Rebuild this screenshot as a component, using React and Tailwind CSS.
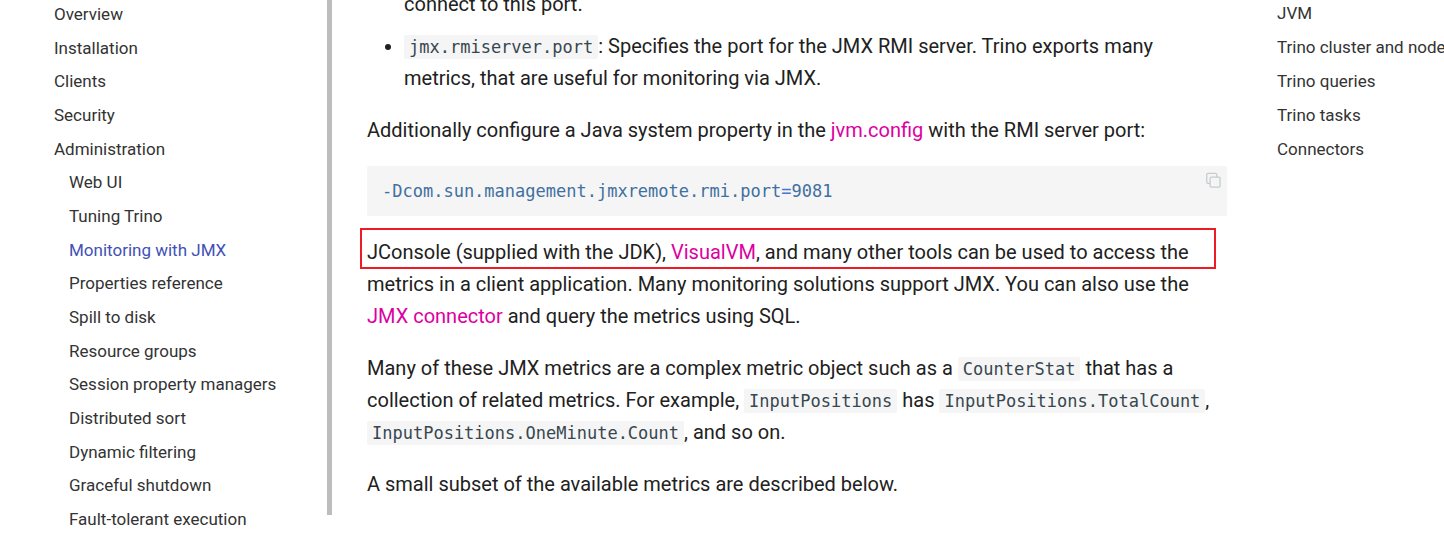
import React from 'react'

const sections = ['Overview', 'Installation', 'Clients', 'Security', 'Administration']

const adminPages = [
  'Web UI',
  'Tuning Trino',
  'Monitoring with JMX',
  'Properties reference',
  'Spill to disk',
  'Resource groups',
  'Session property managers',
  'Distributed sort',
  'Dynamic filtering',
  'Graceful shutdown',
  'Fault-tolerant execution',
]

const toc = ['JVM', 'Trino cluster and nodes', 'Trino queries', 'Trino tasks', 'Connectors']

const currentPage = 'Monitoring with JMX'

function Code({ children }) {
  return (
    <code className="rounded-xs bg-[#f5f5f5] px-[5px] py-0.5 font-['DejaVu_Sans_Mono',monospace] text-[17px] leading-none text-[#37474f]">
      {children}
    </code>
  )
}

function DocLink({ children }) {
  return <a href="#" className="text-[#dd00a1]">{children}</a>
}

function CopyIcon() {
  return (
    <svg viewBox="0 0 24 24" className="size-5" fill="none" stroke="currentColor" strokeWidth="1.5" strokeLinejoin="round">
      <rect x="8.5" y="8.5" width="12" height="12" rx="1.5" />
      <path d="M16.5 8.5v-3a1.5 1.5 0 0 0 -1.5 -1.5h-9a1.5 1.5 0 0 0 -1.5 1.5v9a1.5 1.5 0 0 0 1.5 1.5h2.5" />
    </svg>
  )
}

function Sidebar() {
  return (
    <aside className="flex w-[332px] shrink-0 justify-between">
      <nav aria-label="Documentation" className="pl-[54px] pt-0.5 pb-[7px] text-[17px] leading-6 text-[#333333]">
        <ul className="flex h-full flex-col justify-between">
          {sections.map((name) => (
            <li key={name}><a href="#">{name}</a></li>
          ))}
          {adminPages.map((name) => (
            <li key={name} className="pl-[15px]">
              <a href="#" className={name === currentPage ? 'text-[#3f51b5]' : ''}>{name}</a>
            </li>
          ))}
        </ul>
      </nav>
      <div className="mb-[23px] w-[5px] bg-[#bdbdbd]" />
    </aside>
  )
}

function Article() {
  return (
    <main className="-mt-3 flex min-w-0 flex-1 flex-col gap-5 pl-[35px] pr-[50px] text-xl leading-8">
      <ul className="flex list-disc flex-col gap-2.5 pl-[37px]">
        <li className="list-none">connect to this port.</li>
        <li>
          <Code>jmx.rmiserver.port</Code>: Specifies the port for the JMX RMI server. Trino exports many
          metrics, that are useful for monitoring via JMX.
        </li>
      </ul>

      <p>
        Additionally configure a Java system property in the <DocLink>jvm.config</DocLink> with the RMI server port:
      </p>

      <div className="relative rounded-xs bg-[#f5f5f5]">
        <pre className="px-[15px] py-3 text-[17px] leading-[26px] text-[#4070a0]">
          <code className="block font-['DejaVu_Sans_Mono',monospace]">-Dcom.sun.management.jmxremote.rmi.port<span className="text-[#4876d6]">=</span>9081</code>
        </pre>
        <button type="button" aria-label="Copy" className="absolute right-1 top-1 text-[#c3ccd1]">
          <CopyIcon />
        </button>
      </div>

      <p className="relative">
        JConsole (supplied with the JDK), <DocLink>VisualVM</DocLink>, and many other tools can be used to access the
        metrics in a client application. Many monitoring solutions support JMX. You can also use the{' '}
        <DocLink>JMX connector</DocLink> and query the metrics using SQL.
        <span className="absolute -left-[7px] -top-2 right-[11px] h-[41px] border-2 border-[#ed1c24]" />
      </p>

      <p>
        Many of these JMX metrics are a complex metric object such as a <Code>CounterStat</Code> that has a
        collection of related metrics. For example, <Code>InputPositions</Code> has{' '}
        <Code>InputPositions.TotalCount</Code>, <Code>InputPositions.OneMinute.Count</Code>, and so on.
      </p>

      <p>A small subset of the available metrics are described below.</p>
    </main>
  )
}

function TableOfContents() {
  return (
    <nav aria-label="Table of contents" className="w-[167px] shrink-0 overflow-hidden whitespace-nowrap pt-px text-[17px] leading-6 text-[#333333]">
      <ul className="flex flex-col gap-2.5">
        {toc.map((name) => (
          <li key={name}><a href="#">{name}</a></li>
        ))}
      </ul>
    </nav>
  )
}

export default function App() {
  return (
    <div className="flex h-screen overflow-hidden bg-white font-['Roboto',sans-serif] text-[#212121]">
      <Sidebar />
      <Article />
      <TableOfContents />
    </div>
  )
}
